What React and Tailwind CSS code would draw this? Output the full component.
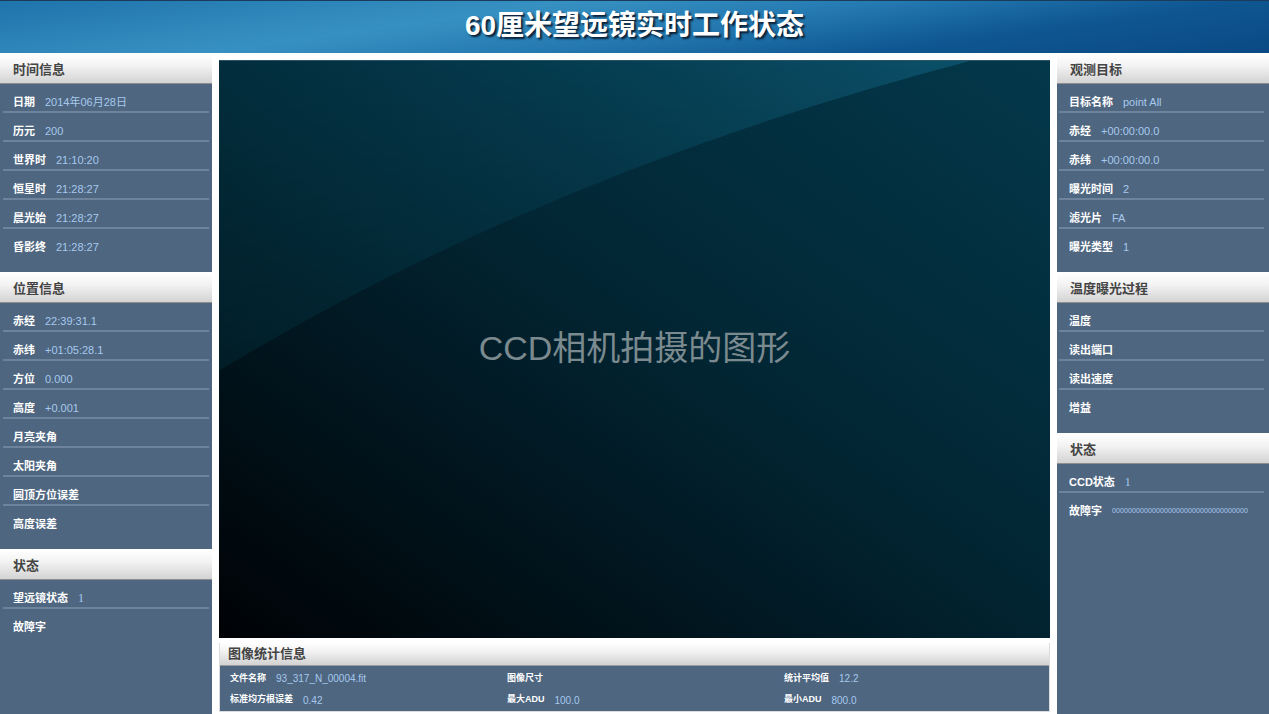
import React from 'react';

const timeRows = [
  ['日期', '2014年06月28日'],
  ['历元', '200'],
  ['世界时', '21:10:20'],
  ['恒星时', '21:28:27'],
  ['晨光始', '21:28:27'],
  ['昏影终', '21:28:27'],
];

const posRows = [
  ['赤经', '22:39:31.1'],
  ['赤纬', '+01:05:28.1'],
  ['方位', '0.000'],
  ['高度', '+0.001'],
  ['月亮夹角', ''],
  ['太阳夹角', ''],
  ['圆顶方位误差', ''],
  ['高度误差', ''],
];

const targetRows = [
  ['目标名称', 'point All'],
  ['赤经', '+00:00:00.0'],
  ['赤纬', '+00:00:00.0'],
  ['曝光时间', '2'],
  ['滤光片', 'FA'],
  ['曝光类型', '1'],
];

const tempRows = [['温度', ''], ['读出端口', ''], ['读出速度', ''], ['增益', '']];

function SectionHeader({ title }) {
  return (
    <div className="h-[30px] shrink-0 flex items-center px-[13px] pt-[2px] bg-[linear-gradient(to_bottom,#ffffff_0%,#f3f3f3_40%,#d3d3d3_100%)] border-b border-[#8e8e8e]">
      <span className="text-[13px] font-bold text-[#444]">{title}</span>
    </div>
  );
}

function Row({ label, value, last, serif, small }) {
  return (
    <div
      className={`h-[29px] pt-[10px] px-[10px] flex items-start border-b-2 ${
        last ? 'border-transparent' : 'border-[#6d849c]'
      }`}
    >
      <span className="text-[11px] leading-[16px] font-bold text-white whitespace-nowrap">{label}</span>
      {value && (
        <span
          className={`ml-[10px] leading-[16px] text-[#a7c9ee] whitespace-nowrap ${
            small ? 'text-[7.2px]' : 'text-[11px]'
          } ${serif ? "font-['Liberation_Serif',serif] text-[12px]" : ''}`}
        >
          {value}
        </span>
      )}
    </div>
  );
}

function Section({ title, rows, grow, inset = 'mx-[3px]' }) {
  return (
    <div className={`flex flex-col bg-[#4e6680] ${grow ? 'flex-1' : ''}`}>
      <SectionHeader title={title} />
      <div className={`${inset} ${grow ? '' : 'pb-[14px]'}`}>
        {rows.map(([l, v, opts = {}], i) => (
          <Row
            key={l + i}
            label={l}
            value={v}
            serif={opts.serif}
            small={opts.small}
            last={i === rows.length - 1}
          />
        ))}
      </div>
    </div>
  );
}

function CcdView() {
  return (
    <div className="relative h-[578px] flex items-center justify-center overflow-hidden border-t border-[#2b5566]">
      <svg className="absolute inset-0 w-full h-full" viewBox="0 0 831 578" preserveAspectRatio="none">
        <defs>
          <linearGradient id="base" x1="1" y1="0" x2="0" y2="1">
            <stop offset="0" stopColor="#03384a" />
            <stop offset="0.45" stopColor="#022634" />
            <stop offset="1" stopColor="#000205" />
          </linearGradient>
          <linearGradient id="sheen" x1="0" y1="0" x2="1" y2="0">
            <stop offset="0" stopColor="#022d3c" />
            <stop offset="0.5" stopColor="#053d51" />
            <stop offset="1" stopColor="#0b5069" />
          </linearGradient>
          <linearGradient id="fade" x1="0" y1="0" x2="0" y2="1">
            <stop offset="0" stopColor="#000" stopOpacity="0" />
            <stop offset="1" stopColor="#000" stopOpacity="0.35" />
          </linearGradient>
        </defs>
        <rect width="831" height="578" fill="url(#base)" />
        <path d="M0 0 L751 0 Q330 110 0 310 Z" fill="url(#sheen)" />
        <path d="M0 0 L751 0 Q330 110 0 310 Z" fill="url(#fade)" />
      </svg>
      <span className="relative text-[34px] text-[#7b8a8f] -mt-[3px]">CCD相机拍摄的图形</span>
    </div>
  );
}

function StatItem({ label, value }) {
  return (
    <div className="flex items-center h-[21px]">
      <span className="text-[9px] font-bold text-white whitespace-nowrap">{label}</span>
      {value && <span className="ml-[10px] text-[10px] text-[#a7c9ee] whitespace-nowrap">{value}</span>}
    </div>
  );
}

export default function App() {
  return (
    <div className="w-full h-[714px] flex flex-col bg-white overflow-hidden font-['Liberation_Sans','Noto_Sans_CJK_SC',sans-serif]">
      {/* title bar */}
      <div className="h-[53px] shrink-0 flex items-center justify-center border-t border-[#1b3b5a] bg-[linear-gradient(172deg,#1f74ab_0%,#3790c2_35%,#2479b0_55%,#0f5792_75%,#0a4984_100%)]">
        <h1 className="text-[28px] font-bold text-white -mt-[3px] [text-shadow:2px_2px_2px_#0b1d33]">
          60厘米望远镜实时工作状态
        </h1>
      </div>

      <div className="flex flex-1">
        {/* left column */}
        <div className="w-[212px] shrink-0 flex flex-col gap-px pt-px">
          <Section title="时间信息" rows={timeRows} />
          <Section title="位置信息" rows={posRows} />
          <Section title="状态" grow rows={[['望远镜状态', '1', { serif: true }], ['故障字', '']]} />
        </div>

        {/* center */}
        <div className="w-[845px] shrink-0 px-[7px] pt-[7px] flex flex-col">
          <CcdView />
          <div className="mt-[5px] h-[69px] flex flex-col border-x border-b border-[#dcdcdc]">
            <div className="h-[23px] shrink-0 flex items-center px-[8px] bg-[linear-gradient(to_bottom,#ffffff_0%,#f1f1f1_40%,#d2d2d2_100%)] border-b border-[#9a9a9a]">
              <span className="text-[13px] font-bold text-[#444]">图像统计信息</span>
            </div>
            <div className="flex-1 bg-[#4e6680] px-[10px] pt-[2px] grid grid-cols-[277px_277px_1fr]">
              <StatItem label="文件名称" value="93_317_N_00004.fit" />
              <StatItem label="图像尺寸" value="" />
              <StatItem label="统计平均值" value="12.2" />
              <StatItem label="标准均方根误差" value="0.42" />
              <StatItem label="最大ADU" value="100.0" />
              <StatItem label="最小ADU" value="800.0" />
            </div>
          </div>
        </div>

        {/* right column */}
        <div className="flex-1 min-w-0 flex flex-col gap-px pt-px">
          <Section title="观测目标" rows={targetRows} inset="ml-[2px] mr-[5px]" />
          <Section title="温度曝光过程" rows={tempRows} inset="ml-[2px] mr-[5px]" />
          <Section
            title="状态"
            grow
            inset="ml-[2px] mr-[5px]"
            rows={[
              ['CCD状态', '1', { serif: true }],
              ['故障字', '0000000000000000000000000000000000', { small: true }],
            ]}
          />
        </div>
      </div>
    </div>
  );
}
